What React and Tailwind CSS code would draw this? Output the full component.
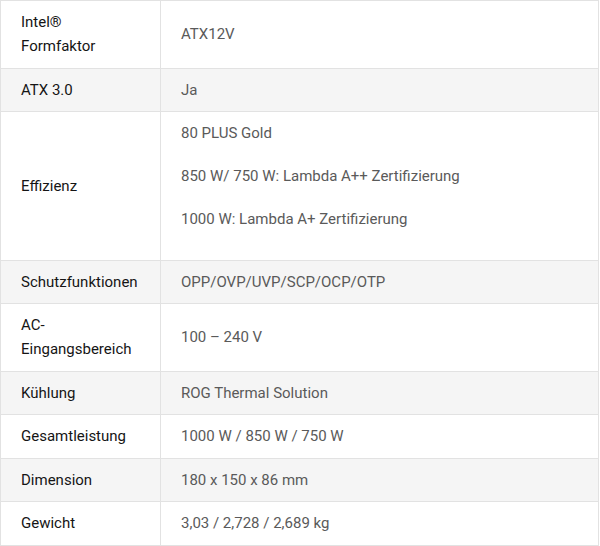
const rows = [
  { label: ["Intel®", "Formfaktor"], value: ["ATX12V"] },
  { label: ["ATX 3.0"], value: ["Ja"] },
  {
    label: ["Effizienz"],
    value: [
      "80 PLUS Gold",
      "850 W/ 750 W: Lambda A++ Zertifizierung",
      "1000 W: Lambda A+ Zertifizierung",
    ],
    paragraphs: true,
  },
  { label: ["Schutzfunktionen"], value: ["OPP/OVP/UVP/SCP/OCP/OTP"] },
  { label: ["AC-", "Eingangsbereich"], value: ["100 – 240 V"] },
  { label: ["Kühlung"], value: ["ROG Thermal Solution"] },
  { label: ["Gesamtleistung"], value: ["1000 W / 850 W / 750 W"] },
  { label: ["Dimension"], value: ["180 x 150 x 86 mm"] },
  { label: ["Gewicht"], value: ["3,03 / 2,728 / 2,689 kg"] },
];

export default function App() {
  return (
    <div className="w-[600px] h-[546px] bg-white font-['Roboto',sans-serif] leading-[24px]">
      <table className="w-[599px] border-collapse border border-[#dddddd]">
        <tbody>
          {rows.map((row, idx) => (
            <tr
              key={idx}
              className={idx % 2 === 1 ? "bg-[#f5f5f5]" : "bg-white"}
            >
              <td className="w-[160px] border border-[#e2e2e2] px-[20px] py-[9.25px] align-middle text-[15px] font-normal text-[#151515]">
                {row.label.map((l, i) => (
                  <div key={i}>{l}</div>
                ))}
              </td>
              <td className="border border-[#e2e2e2] px-[20px] py-[9.25px] align-middle text-[15px] text-[#5a5a5a]">
                {row.paragraphs
                  ? row.value.map((v, i) => (
                      <p key={i} className="mb-[19px]">
                        {v}
                      </p>
                    ))
                  : row.value.map((v, i) => <div key={i}>{v}</div>)}
              </td>
            </tr>
          ))}
        </tbody>
      </table>
    </div>
  );
}
